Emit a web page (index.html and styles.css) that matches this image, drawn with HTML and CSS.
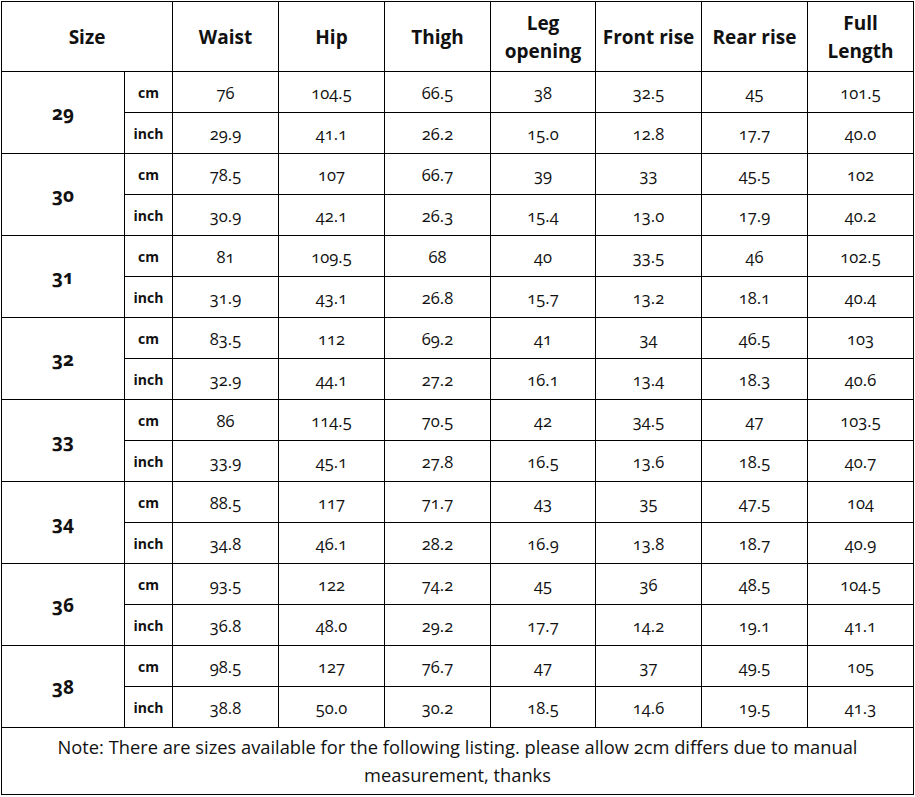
FILE: index.html
```html
<!DOCTYPE html>
<html>
<head>
<meta charset="utf-8">
<link rel="stylesheet" href="styles.css">
</head>
<body>
<table class="chart">
  <colgroup>
    <col class="c-size"><col class="c-unit">
    <col class="c-m"><col class="c-m"><col class="c-m"><col class="c-m5"><col class="c-m"><col class="c-m"><col class="c-m">
  </colgroup>
  <thead>
    <tr class="head">
      <th colspan="2">Size</th>
      <th>Waist</th>
      <th>Hip</th>
      <th>Thigh</th>
      <th>Leg<br>opening</th>
      <th>Front rise</th>
      <th>Rear rise</th>
      <th>Full<br>Length</th>
    </tr>
  </thead>
  <tbody>
    <tr><td class="size" rowspan="2">29</td><td class="unit">cm</td><td>76</td><td>104.5</td><td>66.5</td><td>38</td><td>32.5</td><td>45</td><td>101.5</td></tr>
    <tr><td class="unit">inch</td><td>29.9</td><td>41.1</td><td>26.2</td><td>15.0</td><td>12.8</td><td>17.7</td><td>40.0</td></tr>
    <tr><td class="size" rowspan="2">30</td><td class="unit">cm</td><td>78.5</td><td>107</td><td>66.7</td><td>39</td><td>33</td><td>45.5</td><td>102</td></tr>
    <tr><td class="unit">inch</td><td>30.9</td><td>42.1</td><td>26.3</td><td>15.4</td><td>13.0</td><td>17.9</td><td>40.2</td></tr>
    <tr><td class="size" rowspan="2">31</td><td class="unit">cm</td><td>81</td><td>109.5</td><td>68</td><td>40</td><td>33.5</td><td>46</td><td>102.5</td></tr>
    <tr><td class="unit">inch</td><td>31.9</td><td>43.1</td><td>26.8</td><td>15.7</td><td>13.2</td><td>18.1</td><td>40.4</td></tr>
    <tr><td class="size" rowspan="2">32</td><td class="unit">cm</td><td>83.5</td><td>112</td><td>69.2</td><td>41</td><td>34</td><td>46.5</td><td>103</td></tr>
    <tr><td class="unit">inch</td><td>32.9</td><td>44.1</td><td>27.2</td><td>16.1</td><td>13.4</td><td>18.3</td><td>40.6</td></tr>
    <tr><td class="size" rowspan="2">33</td><td class="unit">cm</td><td>86</td><td>114.5</td><td>70.5</td><td>42</td><td>34.5</td><td>47</td><td>103.5</td></tr>
    <tr><td class="unit">inch</td><td>33.9</td><td>45.1</td><td>27.8</td><td>16.5</td><td>13.6</td><td>18.5</td><td>40.7</td></tr>
    <tr><td class="size" rowspan="2">34</td><td class="unit">cm</td><td>88.5</td><td>117</td><td>71.7</td><td>43</td><td>35</td><td>47.5</td><td>104</td></tr>
    <tr><td class="unit">inch</td><td>34.8</td><td>46.1</td><td>28.2</td><td>16.9</td><td>13.8</td><td>18.7</td><td>40.9</td></tr>
    <tr><td class="size" rowspan="2">36</td><td class="unit">cm</td><td>93.5</td><td>122</td><td>74.2</td><td>45</td><td>36</td><td>48.5</td><td>104.5</td></tr>
    <tr><td class="unit">inch</td><td>36.8</td><td>48.0</td><td>29.2</td><td>17.7</td><td>14.2</td><td>19.1</td><td>41.1</td></tr>
    <tr><td class="size" rowspan="2">38</td><td class="unit">cm</td><td>98.5</td><td>127</td><td>76.7</td><td>47</td><td>37</td><td>49.5</td><td>105</td></tr>
    <tr><td class="unit">inch</td><td>38.8</td><td>50.0</td><td>30.2</td><td>18.5</td><td>14.6</td><td>19.5</td><td>41.3</td></tr>
    <tr class="note-row"><td colspan="9" class="note">Note: There are sizes available for the following listing. please allow 2cm differs due to manual measurement, thanks</td></tr>
  </tbody>
</table>
</body>
</html>
```
FILE: styles.css
```css
html, body {
  margin: 0;
  padding: 0;
  background: #fff;
}
body {
  padding: 1px 0 0 1px;
  font-family: "Open Sans", "Lato", sans-serif;
  color: #111;
}
.chart {
  border-collapse: collapse;
  table-layout: fixed;
  width: 913px;
  font-variant-numeric: oldstyle-nums;
  font-feature-settings: "onum" 1;
}
.c-size { width: 123px; }
.c-unit { width: 48px; }
.c-m { width: 106px; }
.c-m5 { width: 105px; }
.chart th, .chart td {
  border: 1.5px solid #000;
  text-align: center;
  padding: 0;
}
.head th {
  height: 69px;
  font-size: 19px;
  font-weight: 700;
  line-height: 28px;
}
.chart td {
  height: 40px;
  font-size: 16.5px;
}
.chart td.size {
  font-size: 19px;
  font-weight: 700;
}
.chart td.unit {
  font-size: 14px;
  font-weight: 700;
}
.chart td.note {
  height: 66px;
  font-size: 18.3px;
  line-height: 28px;
  padding: 0 40px;
}
```
